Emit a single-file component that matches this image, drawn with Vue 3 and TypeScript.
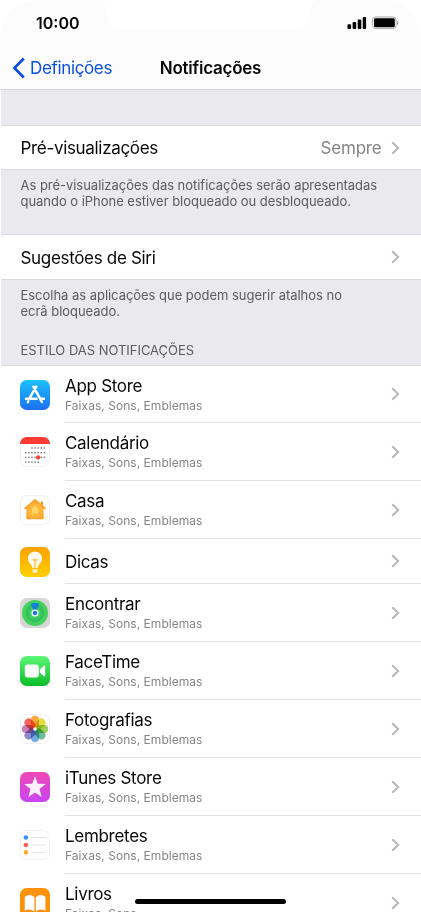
<script setup lang="ts">
import { ref } from 'vue';

interface AppEntry {
    id: string;
    name: string;
    detail?: string;
}

const detail = 'Faixas, Sons, Emblemas';

const apps = ref<AppEntry[]>([
    { id: 'appstore', name: 'App Store', detail },
    { id: 'calendar', name: 'Calendário', detail },
    { id: 'home', name: 'Casa', detail },
    { id: 'tips', name: 'Dicas' },
    { id: 'find', name: 'Encontrar', detail },
    { id: 'facetime', name: 'FaceTime', detail },
    { id: 'photos', name: 'Fotografias', detail },
    { id: 'itunes', name: 'iTunes Store', detail },
    { id: 'reminders', name: 'Lembretes', detail },
    { id: 'books', name: 'Livros', detail: 'Faixas, Sons' },
]);

const petals = ['#fb9a1c', '#d9dc1d', '#8fc63f', '#4fb383', '#5b9fe0', '#7d74bd', '#c06ba6', '#f04a3c'];

// calendar days: [first column, last column] per week
const weeks = [[2, 6], [0, 6], [0, 6], [0, 4]];
const days = weeks.flatMap(([from, to], row) =>
    Array.from({ length: to - from + 1 }, (_, i) => ({
        x: 5 + (from + i) * 3.1,
        y: 10.3 + row * 4.7,
    }))
);
</script>

<template>
    <div class="screen">
        <header>
            <div class="status">
                <span class="time">10:00</span>
                <svg class="indicators" width="52" height="14" viewBox="0 0 52 14">
                    <rect x="0.5" y="8.2" width="3.6" height="4.8" rx="1" />
                    <rect x="5.6" y="6" width="3.6" height="7" rx="1" />
                    <rect x="10.7" y="3.6" width="3.6" height="9.4" rx="1" />
                    <rect x="15.7" y="1" width="3.4" height="12" rx="1" />
                    <rect x="25.5" y="1" width="23.5" height="11.6" rx="3" fill="none" stroke="#aaa" />
                    <rect x="27" y="2.3" width="20.8" height="9" rx="1.4" />
                    <path d="M50 5v4q1.5-.6 1.5-2T50 5z" fill="#999" />
                </svg>
            </div>
            <nav>
                <a class="back">
                    <svg width="14" height="22" viewBox="0 0 14 22">
                        <path d="M11.8 1.5L2.4 11l9.4 9.5" fill="none" stroke="#0b4fe0" stroke-width="2.7" />
                    </svg>
                    <span>Definições</span>
                </a>
                <h1>Notificações</h1>
            </nav>
        </header>

        <main>
            <section class="cell preview">
                <span class="label">Pré-visualizações</span>
                <span class="value">Sempre</span>
                <svg class="chevron" width="9" height="14" viewBox="0 0 9 14">
                    <path d="M1.2 1.2L7.2 7l-6 5.8" />
                </svg>
            </section>
            <p class="note note-preview">As pré-visualizações das notificações serão apresentadas<br>quando o iPhone estiver bloqueado ou desbloqueado.</p>

            <section class="cell siri">
                <span class="label">Sugestões de Siri</span>
                <svg class="chevron" width="9" height="14" viewBox="0 0 9 14">
                    <path d="M1.2 1.2L7.2 7l-6 5.8" />
                </svg>
            </section>
            <p class="note note-siri">Escolha as aplicações que podem sugerir atalhos no<br>ecrã bloqueado.</p>

            <h2>ESTILO DAS NOTIFICAÇÕES</h2>
            <ul>
                <li v-for="app in apps" :key="app.id" :class="{ short: !app.detail }">
                    <svg class="icon" width="30" height="30" viewBox="0 0 30 30">
                        <template v-if="app.id === 'appstore'">
                            <defs>
                                <linearGradient id="blue" x2="0" y2="1">
                                    <stop stop-color="#1ac2fb" />
                                    <stop offset="1" stop-color="#1c6ff0" />
                                </linearGradient>
                            </defs>
                            <rect width="30" height="30" rx="6.6" fill="url(#blue)" />
                            <g stroke="#fff" stroke-width="2.5" stroke-linecap="round">
                                <path d="M16.3 6.7L9.8 17.7M13.4 6.7l8.5 15.2M6 18.8h10.6M21.3 18.8h2.6M8.4 21.2l-.5.9" />
                            </g>
                        </template>
                        <template v-else-if="app.id === 'calendar'">
                            <rect class="tile" x=".5" y=".5" width="29" height="29" rx="6.4" />
                            <path d="M0 7V6.6A6.6 6.6 0 0 1 6.6 0h16.8A6.6 6.6 0 0 1 30 6.6V7z" fill="#fb3b33" />
                            <rect v-for="(day, i) in days" :key="i" :x="day.x" :y="day.y" width="1.5" height="1.4" fill="#777" />
                            <circle cx="18.1" cy="20.4" r="2.1" fill="#fb3b33" />
                        </template>
                        <template v-else-if="app.id === 'home'">
                            <defs>
                                <radialGradient id="house" cy=".6" r=".6">
                                    <stop stop-color="#ffda75" />
                                    <stop offset=".5" stop-color="#ffb340" />
                                    <stop offset="1" stop-color="#fb8f0a" />
                                </radialGradient>
                            </defs>
                            <rect class="tile" x=".5" y=".5" width="29" height="29" rx="6.4" />
                            <path d="M15 4L4.2 13q-.5 1 .4 1h1.8v9.2q0 1 1 1h15.2q1 0 1-1V14h1.8q.9 0 .4-1L23 10.4V6.5h-2.2v2.1z" fill="url(#house)" />
                            <path d="M15 8.2l-5.6 4.6v8.4h11.2v-8.4z" fill="#ffb738" />
                            <path d="M15 11l-3.2 2.6v5.2h6.4v-5.2z" fill="#ffd666" />
                        </template>
                        <template v-else-if="app.id === 'tips'">
                            <defs>
                                <linearGradient id="yellow" x2="0" y2="1">
                                    <stop stop-color="#fda000" />
                                    <stop offset="1" stop-color="#ffd000" />
                                </linearGradient>
                            </defs>
                            <rect width="30" height="30" rx="6.6" fill="url(#yellow)" />
                            <path d="M15 4.5a7.1 7.1 0 0 0-7.1 7.2c0 4.4 4.3 5.5 4.6 9.3h5c.3-3.8 4.6-4.9 4.6-9.3A7.1 7.1 0 0 0 15 4.5z" fill="#fffaf0" />
                            <path d="M12.3 12.8h5.4M15 12.8v8.4" stroke="#fdb92b" stroke-width="1.2" />
                            <path d="M12.6 22.2h4.8v2.4l-1.2 1.2h-2.4l-1.2-1.2z" fill="#fffaf0" />
                            <path d="M12.6 23.7h4.8" stroke="#ffd75a" stroke-width=".6" />
                        </template>
                        <template v-else-if="app.id === 'find'">
                            <rect width="30" height="30" rx="6.6" fill="#d6d6d4" />
                            <circle cx="15" cy="15" r="13" fill="#43d35d" />
                            <circle cx="15" cy="15" r="9.3" fill="#36c05d" />
                            <circle cx="15" cy="15" r="6" fill="#45d163" />
                            <path d="M10.6 5.8q4.4-1.9 8.8 0L16.3 13h-2.6z" fill="#1684d6" />
                            <circle cx="15" cy="15" r="3.5" fill="#fff" />
                            <circle cx="15" cy="15" r="2.2" fill="#1474ee" />
                        </template>
                        <template v-else-if="app.id === 'facetime'">
                            <defs>
                                <linearGradient id="green" x2="0" y2="1">
                                    <stop stop-color="#5df777" />
                                    <stop offset="1" stop-color="#0abd29" />
                                </linearGradient>
                            </defs>
                            <rect width="30" height="30" rx="6.6" fill="url(#green)" />
                            <rect x="4.8" y="8.5" width="14" height="13" rx="3" fill="#fff" />
                            <path d="M19.8 13.2l4.2-3.5q1.2-.7 1.2.6v9.4q0 1.3-1.2.6l-4.2-3.5z" fill="#fff" />
                        </template>
                        <template v-else-if="app.id === 'photos'">
                            <rect class="tile" x=".5" y=".5" width="29" height="29" rx="6.4" />
                            <rect
                                v-for="(petal, i) in petals"
                                :key="petal"
                                class="petal"
                                x="10.9"
                                y="1.8"
                                width="8.2"
                                height="11.8"
                                rx="4.1"
                                :fill="petal"
                                :transform="`rotate(${i * 45} 15 15)`"
                            />
                        </template>
                        <template v-else-if="app.id === 'itunes'">
                            <defs>
                                <linearGradient id="pink" x2="0" y2="1">
                                    <stop stop-color="#ee48b5" />
                                    <stop offset="1" stop-color="#c944f2" />
                                </linearGradient>
                            </defs>
                            <rect width="30" height="30" rx="6.6" fill="url(#pink)" />
                            <path d="M15 4.2l2.8 7.5 8 .4-6.3 5 2.2 7.8-6.7-4.4-6.7 4.4 2.2-7.8-6.3-5 8-.4z" fill="#fdf0fd" />
                        </template>
                        <template v-else-if="app.id === 'reminders'">
                            <rect class="tile" x=".5" y=".5" width="29" height="29" rx="6.4" />
                            <path d="M11 7.5h15M11 15h15M11 22.4h15" stroke="#ddd" stroke-width=".8" />
                            <g stroke-width="1" fill-opacity=".9" stroke-opacity=".35">
                                <circle cx="5.9" cy="7.5" r="2.1" fill="#1685f5" stroke="#1685f5" />
                                <circle cx="5.9" cy="15" r="2.1" fill="#fa453b" stroke="#fa453b" />
                                <circle cx="5.9" cy="22.4" r="2.1" fill="#fb9f15" stroke="#fb9f15" />
                            </g>
                        </template>
                        <template v-else>
                            <rect width="30" height="30" rx="6.6" fill="#fd930a" />
                            <path d="M14.4 9.2Q10 4.8 4.8 8.8v14q5-3 9.6.8zM15.8 9.2q4.4-4.4 9.6-.4v14q-5-3-9.6.8z" fill="#fff" />
                        </template>
                    </svg>
                    <div class="row">
                        <div class="texts">
                            <div class="name">{{ app.name }}</div>
                            <div v-if="app.detail" class="detail">{{ app.detail }}</div>
                        </div>
                        <svg class="chevron" width="9" height="14" viewBox="0 0 9 14">
                            <path d="M1.2 1.2L7.2 7l-6 5.8" />
                        </svg>
                    </div>
                </li>
            </ul>
        </main>
        <!-- notch and home indicator sit over the page -->
        <svg class="notch" width="215" height="31" viewBox="0 0 215 31">
            <path d="M0 0q5 2 5.5 10c.5 13 5 20 18 20h168c13 0 17-7 18-20Q210 2 215 0z" fill="#fff" />
        </svg>
        <div class="home-bar"></div>
    </div>
</template>

<style>
body {
    margin: 0;
    background: #fff;
}
</style>

<style scoped>
.screen {
    position: relative;
    width: 421px;
    height: 912px;
    overflow: hidden;
    background: #fff;
    color: #080808;
    font-family: Inter, "Liberation Sans", sans-serif;
    white-space: nowrap;
}

header {
    box-sizing: border-box;
    height: 90px;
    background: #fcfcfc;
    border-bottom: 1px solid #d5d5d7;
    border-radius: 38px 38px 0 0;
}

.status {
    display: flex;
    justify-content: space-between;
    align-items: center;
    height: 46px;
    padding: 0 22px 0 36px;
}

.time {
    font-size: 16px;
    font-weight: 600;
}

nav {
    display: grid;
    grid-template-columns: 1fr auto 1fr;
    align-items: center;
    height: 43px;
    padding: 0 12px;
}

.back {
    display: flex;
    align-items: center;
    gap: 4px;
    color: #0b4fe0;
    font-size: 17px;
    letter-spacing: -0.35px;
}

h1 {
    margin: 0;
    font-size: 17px;
    font-weight: 600;
    letter-spacing: -0.25px;
}

main {
    padding-top: 35px;
    background: #eae9ee;
    border-left: 1px solid #fff;
}

.cell {
    box-sizing: border-box;
    display: flex;
    align-items: center;
    height: 45px;
    padding: 0 21.5px 0 19.5px;
    background: #fff;
    border-top: 1px solid #dcdcde;
    border-bottom: 1px solid #dcdcde;
    font-size: 17px;
}

.siri {
    height: 46px;
}

.siri .label {
    padding-top: 1px;
}

.label {
    flex: 1;
    letter-spacing: -0.32px;
}

.value {
    margin-right: 9px;
    color: #858585;
    letter-spacing: -0.2px;
}

.chevron {
    flex: none;
    fill: none;
    stroke: #b8b8bb;
    stroke-width: 2;
}

.note {
    box-sizing: border-box;
    margin: 0;
    padding: 7px 19.5px 0;
    color: #5b5b5e;
    font-size: 13px;
    line-height: 16px;
    letter-spacing: -0.03px;
}

.note-preview {
    height: 64px;
}

.note-siri {
    height: 62px;
}

h2 {
    box-sizing: border-box;
    height: 23px;
    margin: 0;
    padding: 0 19.5px;
    color: #5b5b5e;
    font-size: 13px;
    font-weight: 400;
    line-height: 17px;
    letter-spacing: -0.03px;
}

ul {
    margin: 0;
    padding: 0;
    background: #fff;
    border-top: 1px solid #dcdcde;
    list-style: none;
}

li {
    display: flex;
    align-items: center;
    gap: 15px;
    height: 58px;
    padding-left: 19px;
}

li:first-child {
    height: 57px;
}

li.short {
    height: 45px;
}

.icon {
    flex: none;
}

.tile {
    fill: #fff;
    stroke: #f1f1f1;
}

.petal {
    opacity: 0.85;
    mix-blend-mode: multiply;
}

.row {
    box-sizing: border-box;
    flex: 1;
    display: flex;
    align-items: center;
    justify-content: space-between;
    height: 100%;
    padding-right: 21.5px;
    border-bottom: 1px solid #e2e2e4;
}

.texts {
    padding-top: 1px;
}

.name {
    font-size: 17px;
    line-height: 22px;
    letter-spacing: -0.3px;
}

.detail {
    color: #858585;
    font-size: 12px;
    line-height: 18px;
    letter-spacing: 0.04px;
}

.notch {
    position: absolute;
    top: 0;
    left: 101px;
}

.home-bar {
    position: absolute;
    left: 135px;
    bottom: 8px;
    width: 151px;
    height: 5px;
    border-radius: 3px;
    background: #000;
}
</style>
